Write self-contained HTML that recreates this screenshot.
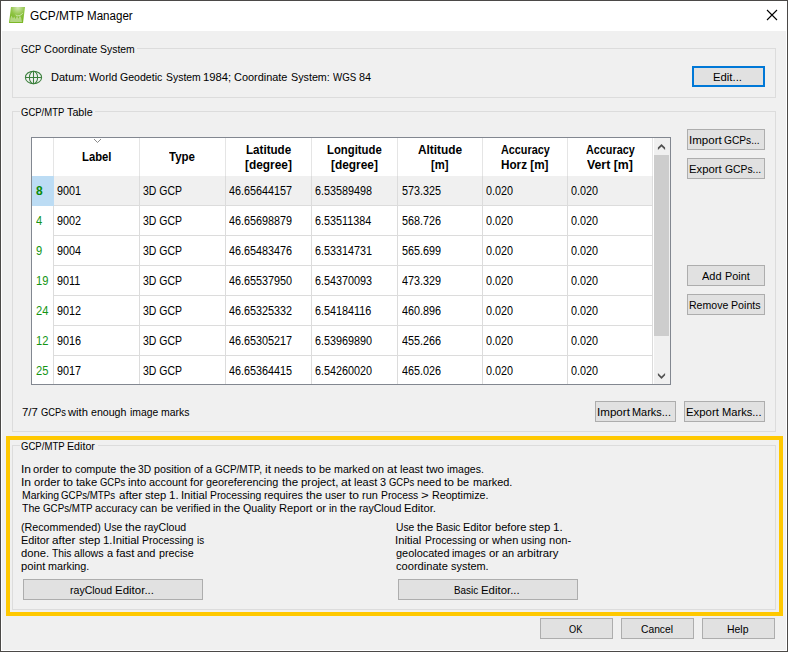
<!DOCTYPE html>
<html lang="en"><head><meta charset="utf-8"><title>GCP/MTP Manager</title>
<style>
html,body{margin:0;padding:0;}
body{width:788px;height:652px;overflow:hidden;background:#f0f0f0;font-family:"Liberation Sans", sans-serif;}
#win{position:absolute;left:0;top:0;width:788px;height:652px;box-sizing:border-box;border:1px solid #4b4947;background:#f0f0f0;box-shadow:inset 0 0 0 1px #fff;}
#c{position:absolute;left:0;top:0;width:788px;height:652px;}
.b{position:absolute;box-sizing:border-box;}
.t{position:absolute;white-space:nowrap;line-height:1;color:#000;transform-origin:0 0;}
.w{display:inline-block;transform-origin:0 0;line-height:1;vertical-align:baseline;}
</style></head>
<body>
<div id="win"></div>
<div id="c">
<div class="b" style="left:1px;top:1px;width:786px;height:30px;background:#fff;"></div>
<div class="b" style="left:12px;top:48px;width:764px;height:50px;border:1px solid #dcdcdc;"></div><div class="b" style="left:20px;top:48px;width:117px;height:1px;background:#f0f0f0;"></div>
<div class="b" style="left:12px;top:111px;width:764px;height:321px;border:1px solid #dcdcdc;"></div><div class="b" style="left:20px;top:111px;width:75px;height:1px;background:#f0f0f0;"></div>
<div class="b" style="left:6px;top:436px;width:777px;height:180px;border:4px solid #ffc800;"></div>
<div class="b" style="left:12px;top:445px;width:764px;height:165px;border:1px solid #dcdcdc;"></div><div class="b" style="left:20px;top:445px;width:78px;height:1px;background:#f0f0f0;"></div>
<div class="b" style="left:687px;top:129px;width:78px;height:21px;background:#e1e1e1;border:1px solid #adadad;"></div>
<div class="b" style="left:687px;top:158px;width:78px;height:21px;background:#e1e1e1;border:1px solid #adadad;"></div>
<div class="b" style="left:687px;top:265px;width:78px;height:21px;background:#e1e1e1;border:1px solid #adadad;"></div>
<div class="b" style="left:687px;top:294px;width:78px;height:21px;background:#e1e1e1;border:1px solid #adadad;"></div>
<div class="b" style="left:595px;top:401px;width:81px;height:21px;background:#e1e1e1;border:1px solid #adadad;"></div>
<div class="b" style="left:684px;top:401px;width:81px;height:21px;background:#e1e1e1;border:1px solid #adadad;"></div>
<div class="b" style="left:23px;top:579px;width:180px;height:21px;background:#e1e1e1;border:1px solid #adadad;"></div>
<div class="b" style="left:398px;top:579px;width:180px;height:21px;background:#e1e1e1;border:1px solid #adadad;"></div>
<div class="b" style="left:540px;top:618px;width:73px;height:21px;background:#e1e1e1;border:1px solid #adadad;"></div>
<div class="b" style="left:621px;top:618px;width:73px;height:21px;background:#e1e1e1;border:1px solid #adadad;"></div>
<div class="b" style="left:702px;top:618px;width:73px;height:21px;background:#e1e1e1;border:1px solid #adadad;"></div>
<div class="b" style="left:692px;top:66px;width:73px;height:21px;background:#e1e1e1;border:2px solid #0078d7;"></div>
<div class="b" style="left:31px;top:137px;width:640px;height:248px;background:#fff;border:1px solid #828790;"></div>
<div class="b" style="left:54px;top:176px;width:599px;height:29px;background:#f0f0f0;"></div>
<div class="b" style="left:54px;top:205px;width:599px;height:1px;background:#dcdcdc;"></div>
<div class="b" style="left:54px;top:235px;width:599px;height:1px;background:#dcdcdc;"></div>
<div class="b" style="left:54px;top:265px;width:599px;height:1px;background:#dcdcdc;"></div>
<div class="b" style="left:54px;top:295px;width:599px;height:1px;background:#dcdcdc;"></div>
<div class="b" style="left:54px;top:325px;width:599px;height:1px;background:#dcdcdc;"></div>
<div class="b" style="left:54px;top:355px;width:599px;height:1px;background:#dcdcdc;"></div>
<div class="b" style="left:53px;top:138px;width:1px;height:38px;background:#e5e5e5;"></div>
<div class="b" style="left:53px;top:176px;width:1px;height:208px;background:#dcdcdc;"></div>
<div class="b" style="left:139px;top:138px;width:1px;height:38px;background:#e5e5e5;"></div>
<div class="b" style="left:139px;top:176px;width:1px;height:208px;background:#dcdcdc;"></div>
<div class="b" style="left:225px;top:138px;width:1px;height:38px;background:#e5e5e5;"></div>
<div class="b" style="left:225px;top:176px;width:1px;height:208px;background:#dcdcdc;"></div>
<div class="b" style="left:311px;top:138px;width:1px;height:38px;background:#e5e5e5;"></div>
<div class="b" style="left:311px;top:176px;width:1px;height:208px;background:#dcdcdc;"></div>
<div class="b" style="left:397px;top:138px;width:1px;height:38px;background:#e5e5e5;"></div>
<div class="b" style="left:397px;top:176px;width:1px;height:208px;background:#dcdcdc;"></div>
<div class="b" style="left:482px;top:138px;width:1px;height:38px;background:#e5e5e5;"></div>
<div class="b" style="left:482px;top:176px;width:1px;height:208px;background:#dcdcdc;"></div>
<div class="b" style="left:567px;top:138px;width:1px;height:38px;background:#e5e5e5;"></div>
<div class="b" style="left:567px;top:176px;width:1px;height:208px;background:#dcdcdc;"></div>
<div class="b" style="left:652px;top:138px;width:1px;height:38px;background:#e5e5e5;"></div>
<div class="b" style="left:652px;top:176px;width:1px;height:208px;background:#dcdcdc;"></div>
<div class="b" style="left:32px;top:176px;width:22px;height:30px;background:#bcdcf4;"></div>
<div class="b" style="left:654px;top:138px;width:16px;height:246px;background:#f0f0f0;"></div>
<div class="b" style="left:654px;top:155px;width:15px;height:181px;background:#cdcdcd;"></div>
<svg class="b" style="left:654px;top:138px" width="16" height="17" viewBox="0 0 16 17"><path d="M3.9 9.6 L7.5 5.9 L11.1 9.6 L11.1 12 L7.5 8.4 L3.9 12 Z" fill="#505050"/></svg>
<svg class="b" style="left:654px;top:367px" width="16" height="17" viewBox="0 0 16 17"><path d="M3.9 8.3 L7.5 12 L11.1 8.3 L11.1 5.9 L7.5 9.5 L3.9 5.9 Z" fill="#505050"/></svg>
<svg class="b" style="left:93px;top:138px" width="9" height="6" viewBox="0 0 9 6"><path d="M1 1 L4.5 4.5 L8 1" fill="none" stroke="#8a8a8a" stroke-width="1"/></svg>
<svg class="b" style="left:8px;top:6px" width="18" height="18" viewBox="0 0 18 18"><defs><radialGradient id="g" cx="0.55" cy="0.05" r="0.75"><stop offset="0" stop-color="#d2e6b0"/><stop offset="0.6" stop-color="#8fc445"/><stop offset="1" stop-color="#7cb827"/></radialGradient></defs><path d="M3 1 L17 1 L15 17 L1 17 Z" fill="url(#g)"/><path d="M2 16 L2.4 12 L3.6 9.6 L5 12.6 L6.2 10.4 L7.6 13 L9 9.8 L10.4 12.8 L11.8 9.8 L13.2 11.8 L14 16 Z" fill="#fff" fill-opacity="0.42"/><path d="M7.6 8.9 Q11 11.4 14.8 7.2" fill="none" stroke="#fff" stroke-opacity="0.6" stroke-width="0.9"/></svg>
<svg class="b" style="left:766px;top:9px" width="12" height="12" viewBox="0 0 12 12"><path d="M1 1 L11 11 M11 1 L1 11" stroke="#000" stroke-width="1.1" fill="none"/></svg>
<svg class="b" style="left:24px;top:69px" width="19" height="17" viewBox="0 0 19 17"><g fill="none" stroke="#3b7f3c" stroke-width="1.05"><ellipse cx="9.5" cy="8.45" rx="8.1" ry="6.3"/><ellipse cx="9.5" cy="8.45" rx="4.1" ry="6.3"/><path d="M9.5 2.2 V14.8 M1.4 8.5 H17.6"/></g></svg>
<span class="t" style="left:30.30px;top:9.84px;font-size:12px;"><span class="w" style="width:53.07px;transform:scaleX(0.9879)">GCP/MTP</span> <span class="w" style="transform:scaleX(0.9648)">Manager</span></span>
<span class="t" style="left:20.50px;top:43.69px;font-size:11px;word-spacing:-0.133px;"><span class="w" style="width:20.16px;transform:scaleX(0.8457)">GCP</span> <span class="w" style="width:53.42px;transform:scaleX(0.9927)">Coordinate</span> <span class="w" style="width:34.77px;transform:scaleX(0.9482)">System</span></span>
<span class="t" style="left:50.80px;top:71.69px;font-size:11px;word-spacing:-0.133px;"><span class="w" style="width:35.48px;transform:scaleX(1.0006)">Datum:</span> <span class="w" style="width:28.22px;transform:scaleX(0.9893)">World</span> <span class="w" style="width:42.33px;transform:scaleX(0.9615)">Geodetic</span> <span class="w" style="width:34.77px;transform:scaleX(0.9481)">System</span> <span class="w" style="width:28.22px;transform:scaleX(1.0252)">1984;</span> <span class="w" style="width:53.42px;transform:scaleX(0.9926)">Coordinate</span> <span class="w" style="width:38.80px;transform:scaleX(0.9767)">System:</span> <span class="w" style="width:23.18px;transform:scaleX(0.8822)">WGS</span> <span class="w" style="width:12.09px;transform:scaleX(0.9885)">84</span></span>
<span class="t" style="left:712.60px;top:71.69px;font-size:11px;transform:scaleX(1.0297);">Edit...</span>
<span class="t" style="left:20.50px;top:106.69px;font-size:11px;word-spacing:-0.188px;"><span class="w" style="width:43.32px;transform:scaleX(0.8644)">GCP/MTP</span> <span class="w" style="width:25.71px;transform:scaleX(0.9778)">Table</span></span>
<span class="t" style="left:688.62px;top:134.69px;font-size:11px;word-spacing:-0.139px;"><span class="w" style="width:32.68px;transform:scaleX(1.0484)">Import</span> <span class="w" style="width:35.70px;transform:scaleX(0.9272)">GCPs...</span></span>
<span class="t" style="left:689.10px;top:163.69px;font-size:11px;word-spacing:-0.098px;"><span class="w" style="width:32.64px;transform:scaleX(1.0266)">Export</span> <span class="w" style="width:36.21px;transform:scaleX(0.9403)">GCPs...</span></span>
<span class="t" style="left:702.40px;top:270.69px;font-size:11px;word-spacing:-0.067px;"><span class="w" style="width:19.58px;transform:scaleX(1.0004)">Add</span> <span class="w" style="width:24.73px;transform:scaleX(0.9864)">Point</span></span>
<span class="t" style="left:689.10px;top:299.69px;font-size:11px;word-spacing:-0.098px;"><span class="w" style="width:39.27px;transform:scaleX(0.9586)">Remove</span> <span class="w" style="width:29.58px;transform:scaleX(0.9674)">Points</span></span>
<span class="t" style="left:21.90px;top:406.69px;font-size:11px;word-spacing:-0.163px;"><span class="w" style="width:15.76px;transform:scaleX(1.0308)">7/7</span> <span class="w" style="width:24.94px;transform:scaleX(0.8501)">GCPs</span> <span class="w" style="width:19.95px;transform:scaleX(1.0200)">with</span> <span class="w" style="width:35.42px;transform:scaleX(0.9648)">enough</span> <span class="w" style="width:28.23px;transform:scaleX(0.9423)">image</span> <span class="w" style="width:28.43px;transform:scaleX(0.9495)">marks</span></span>
<span class="t" style="left:596.58px;top:406.69px;font-size:11px;word-spacing:-0.124px;"><span class="w" style="width:32.85px;transform:scaleX(1.0538)">Import</span> <span class="w" style="width:38.92px;transform:scaleX(0.9950)">Marks...</span></span>
<span class="t" style="left:686.00px;top:406.69px;font-size:11px;word-spacing:-0.077px;"><span class="w" style="width:32.87px;transform:scaleX(1.0340)">Export</span> <span class="w" style="width:39.55px;transform:scaleX(1.0112)">Marks...</span></span>
<span class="t" style="left:20.50px;top:440.69px;font-size:11px;word-spacing:-0.167px;"><span class="w" style="width:43.62px;transform:scaleX(0.8705)">GCP/MTP</span> <span class="w" style="width:27.89px;transform:scaleX(0.9705)">Editor</span></span>
<span class="t" style="left:20.52px;top:463.69px;font-size:11px;word-spacing:-0.150px;"><span class="w" style="width:10.02px;transform:scaleX(1.0924)">In</span> <span class="w" style="width:26.06px;transform:scaleX(1.0147)">order</span> <span class="w" style="width:10.02px;transform:scaleX(1.0924)">to</span> <span class="w" style="width:41.29px;transform:scaleX(0.9786)">compute</span> <span class="w" style="width:16.03px;transform:scaleX(1.0486)">the</span> <span class="w" style="width:13.03px;transform:scaleX(0.9265)">3D</span> <span class="w" style="width:37.08px;transform:scaleX(0.9780)">position</span> <span class="w" style="width:9.02px;transform:scaleX(0.9832)">of</span> <span class="w" style="width:6.01px;transform:scaleX(0.9829)">a</span> <span class="w" style="width:46.90px;transform:scaleX(0.9063)">GCP/MTP,</span> <span class="w" style="width:6.01px;transform:scaleX(1.0933)">it</span> <span class="w" style="width:29.06px;transform:scaleX(0.9697)">needs</span> <span class="w" style="width:10.02px;transform:scaleX(1.0924)">to</span> <span class="w" style="width:12.03px;transform:scaleX(0.9829)">be</span> <span class="w" style="width:35.58px;transform:scaleX(0.9699)">marked</span> <span class="w" style="width:12.03px;transform:scaleX(0.9829)">on</span> <span class="w" style="width:10.02px;transform:scaleX(1.0924)">at</span> <span class="w" style="width:23.05px;transform:scaleX(0.9920)">least</span> <span class="w" style="width:18.04px;transform:scaleX(1.0538)">two</span> <span class="w" style="width:36.88px;transform:scaleX(0.9575)">images.</span></span>
<span class="t" style="left:20.51px;top:476.69px;font-size:11px;word-spacing:-0.127px;"><span class="w" style="width:10.10px;transform:scaleX(1.1010)">In</span> <span class="w" style="width:26.26px;transform:scaleX(1.0227)">order</span> <span class="w" style="width:10.10px;transform:scaleX(1.1010)">to</span> <span class="w" style="width:21.21px;transform:scaleX(1.0202)">take</span> <span class="w" style="width:25.25px;transform:scaleX(0.8608)">GCPs</span> <span class="w" style="width:18.18px;transform:scaleX(1.0251)">into</span> <span class="w" style="width:38.08px;transform:scaleX(0.9884)">account</span> <span class="w" style="width:13.13px;transform:scaleX(1.0229)">for</span> <span class="w" style="width:72.32px;transform:scaleX(0.9855)">georeferencing</span> <span class="w" style="width:16.16px;transform:scaleX(1.0569)">the</span> <span class="w" style="width:37.37px;transform:scaleX(1.0360)">project,</span> <span class="w" style="width:10.10px;transform:scaleX(1.1010)">at</span> <span class="w" style="width:23.23px;transform:scaleX(0.9998)">least</span> <span class="w" style="width:6.06px;transform:scaleX(0.9906)">3</span> <span class="w" style="width:25.25px;transform:scaleX(0.8608)">GCPs</span> <span class="w" style="width:24.24px;transform:scaleX(0.9906)">need</span> <span class="w" style="width:10.10px;transform:scaleX(1.1010)">to</span> <span class="w" style="width:12.12px;transform:scaleX(0.9906)">be</span> <span class="w" style="width:39.39px;transform:scaleX(0.9914)">marked.</span></span>
<span class="t" style="left:21.50px;top:489.69px;font-size:11px;word-spacing:-0.135px;"><span class="w" style="width:37.07px;transform:scaleX(0.9475)">Marking</span> <span class="w" style="width:54.19px;transform:scaleX(0.8868)">GCPs/MTPs</span> <span class="w" style="width:23.17px;transform:scaleX(1.0526)">after</span> <span class="w" style="width:21.15px;transform:scaleX(1.0174)">step</span> <span class="w" style="width:9.57px;transform:scaleX(1.0431)">1.</span> <span class="w" style="width:26.19px;transform:scaleX(1.0199)">Initial</span> <span class="w" style="width:51.17px;transform:scaleX(0.9404)">Processing</span> <span class="w" style="width:38.98px;transform:scaleX(0.9810)">requires</span> <span class="w" style="width:16.12px;transform:scaleX(1.0540)">the</span> <span class="w" style="width:20.85px;transform:scaleX(0.9745)">user</span> <span class="w" style="width:10.07px;transform:scaleX(1.0981)">to</span> <span class="w" style="width:15.82px;transform:scaleX(0.9948)">run</span> <span class="w" style="width:37.27px;transform:scaleX(0.9380)">Process</span> <span class="w" style="width:8.06px;transform:scaleX(1.2000)">&gt;</span> <span class="w" style="width:56.41px;transform:scaleX(0.9713)">Reoptimize.</span></span>
<span class="t" style="left:21.50px;top:502.69px;font-size:11px;word-spacing:-0.115px;"><span class="w" style="width:18.25px;transform:scaleX(0.9629)">The</span> <span class="w" style="width:49.48px;transform:scaleX(0.8897)">GCPs/MTP</span> <span class="w" style="width:42.28px;transform:scaleX(0.9606)">accuracy</span> <span class="w" style="width:17.24px;transform:scaleX(0.9719)">can</span> <span class="w" style="width:12.17px;transform:scaleX(0.9944)">be</span> <span class="w" style="width:34.47px;transform:scaleX(0.9722)">verified</span> <span class="w" style="width:8.11px;transform:scaleX(0.9474)">in</span> <span class="w" style="width:16.22px;transform:scaleX(1.0609)">the</span> <span class="w" style="width:33.16px;transform:scaleX(0.9685)">Quality</span> <span class="w" style="width:33.46px;transform:scaleX(1.0134)">Report</span> <span class="w" style="width:10.14px;transform:scaleX(1.0367)">or</span> <span class="w" style="width:8.11px;transform:scaleX(0.9474)">in</span> <span class="w" style="width:16.22px;transform:scaleX(1.0609)">the</span> <span class="w" style="width:42.28px;transform:scaleX(0.9605)">rayCloud</span> <span class="w" style="width:31.94px;transform:scaleX(1.0242)">Editor.</span></span>
<span class="t" style="left:20.80px;top:521.69px;font-size:11px;word-spacing:-0.127px;"><span class="w" style="width:79.77px;transform:scaleX(0.9738)">(Recommended)</span> <span class="w" style="width:18.18px;transform:scaleX(0.9292)">Use</span> <span class="w" style="width:16.16px;transform:scaleX(1.0566)">the</span> <span class="w" style="width:42.11px;transform:scaleX(0.9565)">rayCloud</span></span>
<span class="t" style="left:20.80px;top:534.69px;font-size:11px;word-spacing:-0.106px;"><span class="w" style="width:28.48px;transform:scaleX(0.9912)">Editor</span> <span class="w" style="width:23.40px;transform:scaleX(1.0630)">after</span> <span class="w" style="width:21.36px;transform:scaleX(1.0274)">step</span> <span class="w" style="width:36.11px;transform:scaleX(1.0361)">1.Initial</span> <span class="w" style="width:51.68px;transform:scaleX(0.9497)">Processing</span> <span class="w" style="width:7.12px;transform:scaleX(0.8964)">is</span></span>
<span class="t" style="left:20.80px;top:547.69px;font-size:11px;word-spacing:-0.092px;"><span class="w" style="width:28.10px;transform:scaleX(1.0209)">done.</span> <span class="w" style="width:19.42px;transform:scaleX(0.9343)">This</span> <span class="w" style="width:29.64px;transform:scaleX(0.9695)">allows</span> <span class="w" style="width:6.13px;transform:scaleX(1.0022)">a</span> <span class="w" style="width:18.39px;transform:scaleX(1.0375)">fast</span> <span class="w" style="width:18.39px;transform:scaleX(1.0022)">and</span> <span class="w" style="width:34.74px;transform:scaleX(0.9798)">precise</span></span>
<span class="t" style="left:20.80px;top:560.69px;font-size:11px;word-spacing:-0.126px;"><span class="w" style="width:24.25px;transform:scaleX(1.0166)">point</span> <span class="w" style="width:41.22px;transform:scaleX(0.9773)">marking.</span></span>
<span class="t" style="left:395.80px;top:521.69px;font-size:11px;word-spacing:-0.114px;"><span class="w" style="width:18.26px;transform:scaleX(0.9336)">Use</span> <span class="w" style="width:16.23px;transform:scaleX(1.0616)">the</span> <span class="w" style="width:24.35px;transform:scaleX(0.9052)">Basic</span> <span class="w" style="width:28.41px;transform:scaleX(0.9886)">Editor</span> <span class="w" style="width:31.45px;transform:scaleX(1.0084)">before</span> <span class="w" style="width:21.31px;transform:scaleX(1.0247)">step</span> <span class="w" style="width:9.64px;transform:scaleX(1.0506)">1.</span></span>
<span class="t" style="left:395.32px;top:534.69px;font-size:11px;word-spacing:-0.124px;"><span class="w" style="width:26.28px;transform:scaleX(1.0236)">Initial</span> <span class="w" style="width:51.36px;transform:scaleX(0.9438)">Processing</span> <span class="w" style="width:10.11px;transform:scaleX(1.0336)">or</span> <span class="w" style="width:26.28px;transform:scaleX(0.9995)">when</span> <span class="w" style="width:24.77px;transform:scaleX(0.9419)">using</span> <span class="w" style="width:22.24px;transform:scaleX(1.0102)">non-</span></span>
<span class="t" style="left:395.80px;top:547.69px;font-size:11px;word-spacing:-0.118px;"><span class="w" style="width:53.49px;transform:scaleX(0.9938)">geolocated</span> <span class="w" style="width:33.74px;transform:scaleX(0.9514)">images</span> <span class="w" style="width:10.13px;transform:scaleX(1.0358)">or</span> <span class="w" style="width:12.16px;transform:scaleX(0.9936)">an</span> <span class="w" style="width:41.54px;transform:scaleX(1.0296)">arbitrary</span></span>
<span class="t" style="left:395.80px;top:560.69px;font-size:11px;word-spacing:-0.108px;"><span class="w" style="width:51.84px;transform:scaleX(1.0092)">coordinate</span> <span class="w" style="width:37.61px;transform:scaleX(0.9925)">system.</span></span>
<span class="t" style="left:70.20px;top:584.69px;font-size:11px;word-spacing:-0.121px;"><span class="w" style="width:42.20px;transform:scaleX(0.9587)">rayCloud</span> <span class="w" style="width:38.96px;transform:scaleX(1.0447)">Editor...</span></span>
<span class="t" style="left:453.80px;top:584.69px;font-size:11px;word-spacing:-0.142px;"><span class="w" style="width:24.11px;transform:scaleX(0.8963)">Basic</span> <span class="w" style="width:38.68px;transform:scaleX(1.0370)">Editor...</span></span>
<span class="t" style="left:568.50px;top:623.69px;font-size:11px;transform:scaleX(0.8396);">OK</span>
<span class="t" style="left:640.60px;top:623.69px;font-size:11px;transform:scaleX(0.9350);">Cancel</span>
<span class="t" style="left:727.00px;top:623.69px;font-size:11px;transform:scaleX(0.9509);">Help</span>
<span class="t" style="left:81.95px;top:150.84px;font-size:12px;transform:scaleX(0.9385);font-weight:bold;">Label</span>
<span class="t" style="left:169.35px;top:150.84px;font-size:12px;transform:scaleX(0.9583);font-weight:bold;">Type</span>
<span class="t" style="left:245.75px;top:143.84px;font-size:12px;transform:scaleX(0.9683);font-weight:bold;">Latitude</span>
<span class="t" style="left:245.05px;top:158.84px;font-size:12px;transform:scaleX(0.9905);font-weight:bold;">[degree]</span>
<span class="t" style="left:327.00px;top:143.84px;font-size:12px;transform:scaleX(0.9432);font-weight:bold;">Longitude</span>
<span class="t" style="left:331.05px;top:158.84px;font-size:12px;transform:scaleX(0.9905);font-weight:bold;">[degree]</span>
<span class="t" style="left:417.75px;top:143.84px;font-size:12px;transform:scaleX(0.9892);font-weight:bold;">Altitude</span>
<span class="t" style="left:431.25px;top:158.84px;font-size:12px;transform:scaleX(0.9375);font-weight:bold;">[m]</span>
<span class="t" style="left:500.50px;top:143.84px;font-size:12px;transform:scaleX(0.9014);font-weight:bold;">Accuracy</span>
<span class="t" style="left:501.25px;top:158.84px;font-size:12px;transform:scaleX(0.9760);font-weight:bold;">Horz [m]</span>
<span class="t" style="left:585.50px;top:143.84px;font-size:12px;transform:scaleX(0.9014);font-weight:bold;">Accuracy</span>
<span class="t" style="left:587.10px;top:158.84px;font-size:12px;transform:scaleX(1.0250);font-weight:bold;">Vert [m]</span>
<span class="t" style="left:36.10px;top:184.84px;font-size:12px;transform:scaleX(1.0000);font-weight:bold;color:#088a08;">8</span>
<span class="t" style="left:57.30px;top:184.84px;font-size:12px;transform:scaleX(0.9000);">9001</span>
<span class="t" style="left:143.00px;top:184.84px;font-size:12px;transform:scaleX(0.8730);">3D GCP</span>
<span class="t" style="left:229.20px;top:184.84px;font-size:12px;transform:scaleX(0.9000);">46.65644157</span>
<span class="t" style="left:315.40px;top:184.84px;font-size:12px;transform:scaleX(0.9000);">6.53589498</span>
<span class="t" style="left:401.60px;top:184.84px;font-size:12px;transform:scaleX(0.9000);">573.325</span>
<span class="t" style="left:486.10px;top:184.84px;font-size:12px;transform:scaleX(0.9000);">0.020</span>
<span class="t" style="left:571.10px;top:184.84px;font-size:12px;transform:scaleX(0.9000);">0.020</span>
<span class="t" style="left:36.30px;top:214.84px;font-size:12px;transform:scaleX(0.9300);color:#149514;">4</span>
<span class="t" style="left:57.30px;top:214.84px;font-size:12px;transform:scaleX(0.9000);">9002</span>
<span class="t" style="left:143.00px;top:214.84px;font-size:12px;transform:scaleX(0.8730);">3D GCP</span>
<span class="t" style="left:229.20px;top:214.84px;font-size:12px;transform:scaleX(0.9000);">46.65698879</span>
<span class="t" style="left:315.40px;top:214.84px;font-size:12px;transform:scaleX(0.9000);">6.53511384</span>
<span class="t" style="left:401.60px;top:214.84px;font-size:12px;transform:scaleX(0.9000);">568.726</span>
<span class="t" style="left:486.10px;top:214.84px;font-size:12px;transform:scaleX(0.9000);">0.020</span>
<span class="t" style="left:571.10px;top:214.84px;font-size:12px;transform:scaleX(0.9000);">0.020</span>
<span class="t" style="left:36.30px;top:244.84px;font-size:12px;transform:scaleX(0.9300);color:#149514;">9</span>
<span class="t" style="left:57.30px;top:244.84px;font-size:12px;transform:scaleX(0.9000);">9004</span>
<span class="t" style="left:143.00px;top:244.84px;font-size:12px;transform:scaleX(0.8730);">3D GCP</span>
<span class="t" style="left:229.20px;top:244.84px;font-size:12px;transform:scaleX(0.9000);">46.65483476</span>
<span class="t" style="left:315.40px;top:244.84px;font-size:12px;transform:scaleX(0.9000);">6.53314731</span>
<span class="t" style="left:401.60px;top:244.84px;font-size:12px;transform:scaleX(0.9000);">565.699</span>
<span class="t" style="left:486.10px;top:244.84px;font-size:12px;transform:scaleX(0.9000);">0.020</span>
<span class="t" style="left:571.10px;top:244.84px;font-size:12px;transform:scaleX(0.9000);">0.020</span>
<span class="t" style="left:36.30px;top:274.84px;font-size:12px;transform:scaleX(0.9300);color:#149514;">19</span>
<span class="t" style="left:57.30px;top:274.84px;font-size:12px;transform:scaleX(0.9000);">9011</span>
<span class="t" style="left:143.00px;top:274.84px;font-size:12px;transform:scaleX(0.8730);">3D GCP</span>
<span class="t" style="left:229.20px;top:274.84px;font-size:12px;transform:scaleX(0.9000);">46.65537950</span>
<span class="t" style="left:315.40px;top:274.84px;font-size:12px;transform:scaleX(0.9000);">6.54370093</span>
<span class="t" style="left:401.60px;top:274.84px;font-size:12px;transform:scaleX(0.9000);">473.329</span>
<span class="t" style="left:486.10px;top:274.84px;font-size:12px;transform:scaleX(0.9000);">0.020</span>
<span class="t" style="left:571.10px;top:274.84px;font-size:12px;transform:scaleX(0.9000);">0.020</span>
<span class="t" style="left:36.30px;top:304.84px;font-size:12px;transform:scaleX(0.9300);color:#149514;">24</span>
<span class="t" style="left:57.30px;top:304.84px;font-size:12px;transform:scaleX(0.9000);">9012</span>
<span class="t" style="left:143.00px;top:304.84px;font-size:12px;transform:scaleX(0.8730);">3D GCP</span>
<span class="t" style="left:229.20px;top:304.84px;font-size:12px;transform:scaleX(0.9000);">46.65325332</span>
<span class="t" style="left:315.40px;top:304.84px;font-size:12px;transform:scaleX(0.9000);">6.54184116</span>
<span class="t" style="left:401.60px;top:304.84px;font-size:12px;transform:scaleX(0.9000);">460.896</span>
<span class="t" style="left:486.10px;top:304.84px;font-size:12px;transform:scaleX(0.9000);">0.020</span>
<span class="t" style="left:571.10px;top:304.84px;font-size:12px;transform:scaleX(0.9000);">0.020</span>
<span class="t" style="left:36.30px;top:334.84px;font-size:12px;transform:scaleX(0.9300);color:#149514;">12</span>
<span class="t" style="left:57.30px;top:334.84px;font-size:12px;transform:scaleX(0.9000);">9016</span>
<span class="t" style="left:143.00px;top:334.84px;font-size:12px;transform:scaleX(0.8730);">3D GCP</span>
<span class="t" style="left:229.20px;top:334.84px;font-size:12px;transform:scaleX(0.9000);">46.65305217</span>
<span class="t" style="left:315.40px;top:334.84px;font-size:12px;transform:scaleX(0.9000);">6.53969890</span>
<span class="t" style="left:401.60px;top:334.84px;font-size:12px;transform:scaleX(0.9000);">455.266</span>
<span class="t" style="left:486.10px;top:334.84px;font-size:12px;transform:scaleX(0.9000);">0.020</span>
<span class="t" style="left:571.10px;top:334.84px;font-size:12px;transform:scaleX(0.9000);">0.020</span>
<span class="t" style="left:36.30px;top:364.84px;font-size:12px;transform:scaleX(0.9300);color:#149514;">25</span>
<span class="t" style="left:57.30px;top:364.84px;font-size:12px;transform:scaleX(0.9000);">9017</span>
<span class="t" style="left:143.00px;top:364.84px;font-size:12px;transform:scaleX(0.8730);">3D GCP</span>
<span class="t" style="left:229.20px;top:364.84px;font-size:12px;transform:scaleX(0.9000);">46.65364415</span>
<span class="t" style="left:315.40px;top:364.84px;font-size:12px;transform:scaleX(0.9000);">6.54260020</span>
<span class="t" style="left:401.60px;top:364.84px;font-size:12px;transform:scaleX(0.9000);">465.026</span>
<span class="t" style="left:486.10px;top:364.84px;font-size:12px;transform:scaleX(0.9000);">0.020</span>
<span class="t" style="left:571.10px;top:364.84px;font-size:12px;transform:scaleX(0.9000);">0.020</span>
</div>
</body></html>
